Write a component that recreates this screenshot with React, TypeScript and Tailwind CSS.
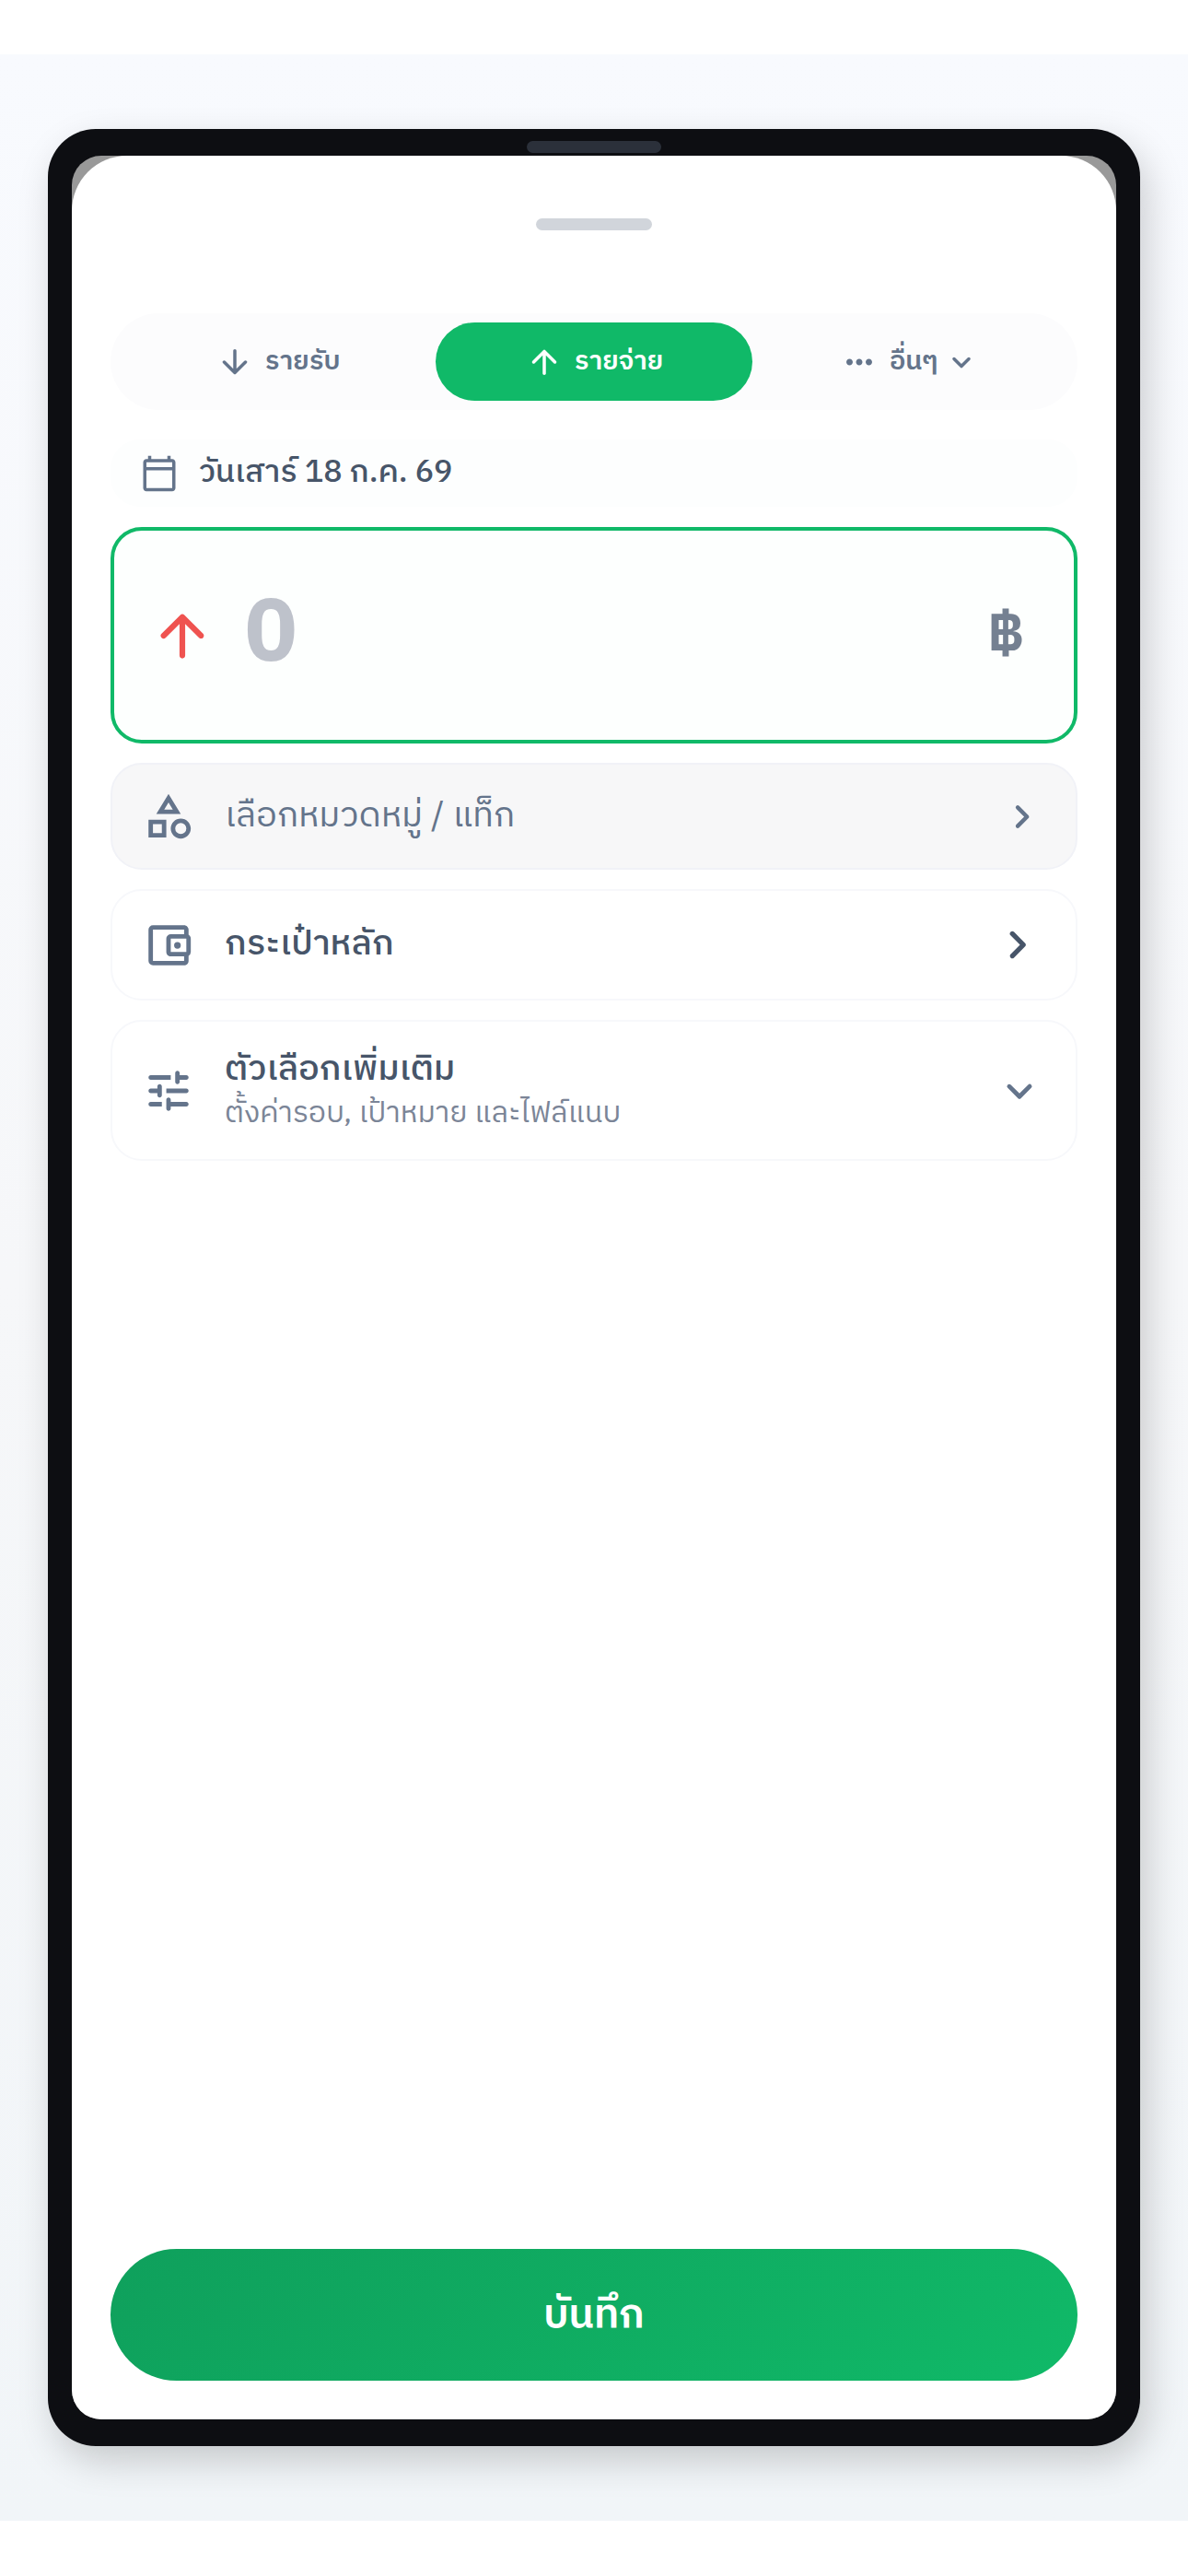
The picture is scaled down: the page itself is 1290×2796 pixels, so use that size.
import type { ReactNode } from "react";
import {
  MdMoreHoriz,
  MdOutlineAccountBalanceWallet,
  MdOutlineCalendarToday,
  MdOutlineCategory,
} from "react-icons/md";

interface IconProps {
  className?: string;
}

function Glyph({ d, className }: IconProps & { d: string }) {
  return (
    <svg viewBox="0 0 24 24" fill="currentColor" aria-hidden="true" className={className}>
      <path d={d} />
    </svg>
  );
}

function ArrowUp({ className }: IconProps) {
  return (
    <Glyph
      className={className}
      d="M13 19V7.83l4.88 4.88c.39.39 1.03.39 1.42 0 .39-.39.39-1.02 0-1.41l-6.59-6.59a.996.996 0 0 0-1.41 0l-6.6 6.58a.996.996 0 1 0 1.41 1.41L11 7.83V19c0 .55.45 1 1 1s1-.45 1-1z"
    />
  );
}

function ArrowDown({ className }: IconProps) {
  return (
    <Glyph
      className={className}
      d="M11 5v11.17l-4.88-4.88c-.39-.39-1.03-.39-1.42 0a.996.996 0 0 0 0 1.41l6.59 6.59c.39.39 1.02.39 1.41 0l6.59-6.59a.996.996 0 1 0-1.41-1.41L13 16.17V5c0-.55-.45-1-1-1s-1 .45-1 1z"
    />
  );
}

function ChevronRight({ className }: IconProps) {
  return (
    <Glyph
      className={className}
      d="M9.29 15.88 13.17 12 9.29 8.12a.996.996 0 1 1 1.41-1.41l4.59 4.59c.39.39.39 1.02 0 1.41L10.7 17.3a.996.996 0 0 1-1.41 0c-.38-.39-.39-1.03 0-1.42z"
    />
  );
}

function ChevronDown({ className }: IconProps) {
  return (
    <Glyph
      className={className}
      d="M8.12 9.29 12 13.17l3.88-3.88a.996.996 0 1 1 1.41 1.41l-4.59 4.59a.996.996 0 0 1-1.41 0L6.7 10.7a.996.996 0 0 1 0-1.41c.39-.38 1.03-.39 1.42 0z"
    />
  );
}

function Tune({ className }: IconProps) {
  return (
    <Glyph
      className={className}
      d="M3 18c0 .55.45 1 1 1h5v-2H4c-.55 0-1 .45-1 1zM3 6c0 .55.45 1 1 1h9V5H4c-.55 0-1 .45-1 1zm10 14v-1h7c.55 0 1-.45 1-1s-.45-1-1-1h-7v-1c0-.55-.45-1-1-1s-1 .45-1 1v4c0 .55.45 1 1 1s1-.45 1-1zM7 10v1H4c-.55 0-1 .45-1 1s.45 1 1 1h3v1c0 .55.45 1 1 1s1-.45 1-1v-4c0-.55-.45-1-1-1s-1 .45-1 1zm14 2c0-.55-.45-1-1-1h-9v2h9c.55 0 1-.45 1-1zm-5-3c.55 0 1-.45 1-1V7h3c.55 0 1-.45 1-1s-.45-1-1-1h-3V4c0-.55-.45-1-1-1s-1 .45-1 1v4c0 .55.45 1 1 1z"
    />
  );
}

interface TabProps {
  active?: boolean;
  children: ReactNode;
}

function Tab({ active = false, children }: TabProps) {
  return (
    <button
      type="button"
      aria-pressed={active}
      className={`flex h-[85px] flex-1 items-center justify-center gap-3 rounded-full text-[29px] font-semibold ${
        active ? "bg-[#10b968] text-white" : "text-[#64748b]"
      }`}
    >
      {children}
    </button>
  );
}

interface RowProps {
  className: string;
  icon: ReactNode;
  trailing: ReactNode;
  children: ReactNode;
}

function Row({ className, icon, trailing, children }: RowProps) {
  return (
    <button
      type="button"
      className={`flex w-full items-center gap-8 rounded-[34px] border-2 px-8 text-left ${className}`}
    >
      <span className="shrink-0 text-[#64748b]">{icon}</span>
      <span className="flex-1">{children}</span>
      {trailing}
    </button>
  );
}

export default function App() {
  return (
    <div className="flex min-h-screen flex-col bg-white pt-[59px] pb-[60px] font-['IBM_Plex_Sans_Thai','Noto_Sans_Thai','Noto_Sans',sans-serif]">
      <main className="flex flex-1 flex-col bg-linear-to-b from-[#f8fafe] via-[#f6f7f9] to-[#f1f5f8] px-[52px] py-[81px]">
        {/* Phone frame */}
        <div className="relative flex flex-1 flex-col rounded-[52px] bg-[#0d0e12] px-[26px] py-[29px] shadow-[8px_16px_40px_rgba(0,0,0,0.18)]">
          <div className="absolute top-[13px] left-1/2 h-[13px] w-[146px] -translate-x-1/2 rounded-full bg-[#2b303a]" />

          <div className="flex flex-1 flex-col overflow-hidden rounded-[32px] bg-[#999999]">
            {/* Bottom sheet */}
            <form className="flex flex-1 flex-col rounded-t-[60px] bg-white px-[42px] pt-[68px] pb-[42px]">
              <div className="h-[13px] w-[126px] self-center rounded-full bg-[#d1d5db]" />

              <div className="mt-[90px] flex rounded-full bg-[#fcfcfd] p-[10px]">
                <Tab>
                  <ArrowDown className="size-[42px]" />
                  รายรับ
                </Tab>
                <Tab active>
                  <ArrowUp className="size-[42px]" />
                  รายจ่าย
                </Tab>
                <Tab>
                  <MdMoreHoriz className="size-[42px]" />
                  อื่นๆ
                  <ChevronDown className="-ml-2 size-[42px]" />
                </Tab>
              </div>

              <button
                type="button"
                className="mt-8 flex h-[73px] items-center gap-[22px] rounded-[32px] bg-[#fdfefe] px-8 text-[34px] font-medium text-[#475569]"
              >
                <MdOutlineCalendarToday className="size-[42px] text-[#64748b]" />
                วันเสาร์ 18 ก.ค. 69
              </button>

              <div className="mt-[22px] flex flex-col gap-[21px]">
                <label className="flex h-[235px] items-center rounded-[34px] border-4 border-[#10b968] bg-[#fdfffe] pr-[54px] pl-[37px]">
                  <ArrowUp className="size-[74px] shrink-0 text-[#ef5350]" />
                  <input
                    type="text"
                    inputMode="decimal"
                    placeholder="0"
                    aria-label="จำนวนเงิน"
                    className="ml-[31px] min-w-0 flex-1 bg-transparent text-[94px] leading-none font-bold outline-none placeholder:text-[#bec2cb]"
                  />
                  <span className="text-[60px] font-bold text-[#748091]">฿</span>
                </label>

                <Row
                  className="h-[116px] border-[#f1f2f7] bg-[#f7f7f8]"
                  icon={<MdOutlineCategory className="size-[58px]" />}
                  trailing={<ChevronRight className="size-[53px] text-[#64748b]" />}
                >
                  <span className="text-[38px] text-[#64748b]">เลือกหมวดหมู่ / แท็ก</span>
                </Row>

                <Row
                  className="h-[121px] border-[#f7f8fb] bg-white"
                  icon={<MdOutlineAccountBalanceWallet className="size-[58px]" />}
                  trailing={<ChevronRight className="size-[63px] text-[#475569]" />}
                >
                  <span className="text-[38px] font-medium text-[#475569]">กระเป๋าหลัก</span>
                </Row>

                <Row
                  className="h-[153px] border-[#f7f8fb] bg-white"
                  icon={<Tune className="size-[58px]" />}
                  trailing={<ChevronDown className="size-[58px] text-[#64748b]" />}
                >
                  <span className="block text-[38px] leading-[50px] font-medium text-[#475569]">
                    ตัวเลือกเพิ่มเติม
                  </span>
                  <span className="block text-[32px] leading-[46px] text-[#7b8597]">
                    ตั้งค่ารอบ, เป้าหมาย และไฟล์แนบ
                  </span>
                </Row>
              </div>

              <button
                type="submit"
                className="mt-auto h-[143px] rounded-full bg-linear-135 from-[#0fa05c] to-[#10b968] text-[44px] font-semibold text-white"
              >
                บันทึก
              </button>
            </form>
          </div>
        </div>
      </main>
    </div>
  );
}
